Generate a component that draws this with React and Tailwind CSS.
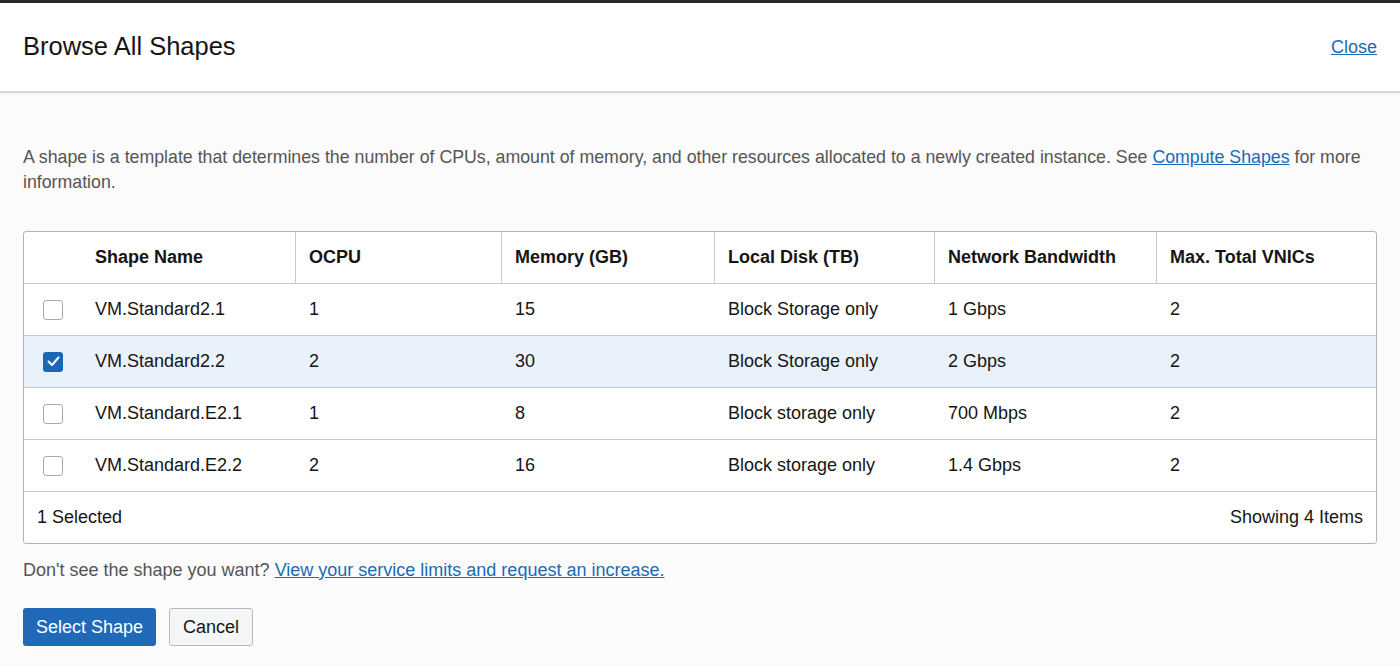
import React, { useState } from 'react';

const shapes = [
  { name: 'VM.Standard2.1', ocpu: '1', mem: '15', disk: 'Block Storage only', net: '1 Gbps', vnics: '2' },
  { name: 'VM.Standard2.2', ocpu: '2', mem: '30', disk: 'Block Storage only', net: '2 Gbps', vnics: '2' },
  { name: 'VM.Standard.E2.1', ocpu: '1', mem: '8', disk: 'Block storage only', net: '700 Mbps', vnics: '2' },
  { name: 'VM.Standard.E2.2', ocpu: '2', mem: '16', disk: 'Block storage only', net: '1.4 Gbps', vnics: '2' },
];

const cols = 'grid grid-cols-[58px_214px_206px_213px_220px_222px_1fr]';

function Checkbox({ checked }) {
  if (checked) {
    return (
      <span className="flex h-[20px] w-[20px] items-center justify-center rounded-[3px] bg-[#1b66b9]">
        <svg width="13" height="11" viewBox="0 0 13 11" fill="none">
          <path d="M1.5 5.5l3.5 3.5 6.5-7.5" stroke="white" strokeWidth="2" strokeLinecap="round" strokeLinejoin="round" />
        </svg>
      </span>
    );
  }
  return <span className="block h-[20px] w-[20px] rounded-[3px] border border-[#a4a9b0] bg-white" />;
}

export default function App() {
  const [selected, setSelected] = useState(1);

  return (
    <div className="min-h-[666px] bg-[#fbfbfb] font-['Liberation_Sans',Arial,sans-serif] text-[#161513]">
      <div className="h-[3px] bg-[#25282d]" />
      <header className="flex h-[90px] items-center justify-between border-b-2 border-[#d5d7da] bg-white px-[23px] shadow-[0_1px_3px_rgba(0,0,0,0.06)]">
        <h1 className="text-[25.5px] leading-none text-[#161513]">Browse All Shapes</h1>
        <a href="#" className="text-[18px] text-[#1a6ab8] underline">Close</a>
      </header>

      <main className="px-[23px] pt-[52px]">
        <p className="text-[17.75px] leading-[25px] text-[#555]">
          A shape is a template that determines the number of CPUs, amount of memory, and other resources allocated to a newly created instance. See{' '}
          <a href="#" className="text-[#1a6ab8] underline">Compute Shapes</a> for more information.
        </p>

        <div className="mt-[36px] overflow-hidden rounded-[3px] border border-[#aeb3b9] bg-white text-[18px]">
          <div className={`${cols} h-[52px] items-center border-b border-[#c6c9cd] font-bold`}>
            <div />
            <div className="flex h-full items-center border-r border-[#c6c9cd] pl-[13px]">Shape Name</div>
            <div className="flex h-full items-center border-r border-[#c6c9cd] pl-[13px]">OCPU</div>
            <div className="flex h-full items-center border-r border-[#c6c9cd] pl-[13px]">Memory (GB)</div>
            <div className="flex h-full items-center border-r border-[#c6c9cd] pl-[13px]">Local Disk (TB)</div>
            <div className="flex h-full items-center border-r border-[#c6c9cd] pl-[13px]">Network Bandwidth</div>
            <div className="flex h-full items-center pl-[13px]">Max. Total VNICs</div>
          </div>
          {shapes.map((s, i) => (
            <div
              key={s.name}
              onClick={() => setSelected(i)}
              className={`${cols} h-[52px] items-center border-b border-[#c6c9cd] ${selected === i ? 'bg-[#e9f1fb]' : 'bg-white'}`}
            >
              <div className="flex justify-center"><Checkbox checked={selected === i} /></div>
              <div className="pl-[13px]">{s.name}</div>
              <div className="pl-[13px]">{s.ocpu}</div>
              <div className="pl-[13px]">{s.mem}</div>
              <div className="pl-[13px]">{s.disk}</div>
              <div className="pl-[13px]">{s.net}</div>
              <div className="pl-[13px]">{s.vnics}</div>
            </div>
          ))}
          <div className="flex h-[51px] items-center justify-between px-[13px]">
            <span>1 Selected</span>
            <span>Showing 4 Items</span>
          </div>
        </div>

        <p className="mt-[14px] text-[18px] leading-[25px] text-[#555]">
          Don't see the shape you want?{' '}
          <a href="#" className="text-[#1a6ab8] underline">View your service limits and request an increase.</a>
        </p>

        <div className="mt-[25px] flex gap-[13px]">
          <button className="h-[38px] rounded-[3px] bg-[#1f69b8] px-[13px] text-[18px] text-white">Select Shape</button>
          <button className="h-[38px] rounded-[3px] border border-[#b6babf] bg-[#f4f5f7] px-[13px] text-[18px] text-[#161513]">Cancel</button>
        </div>
      </main>
    </div>
  );
}
